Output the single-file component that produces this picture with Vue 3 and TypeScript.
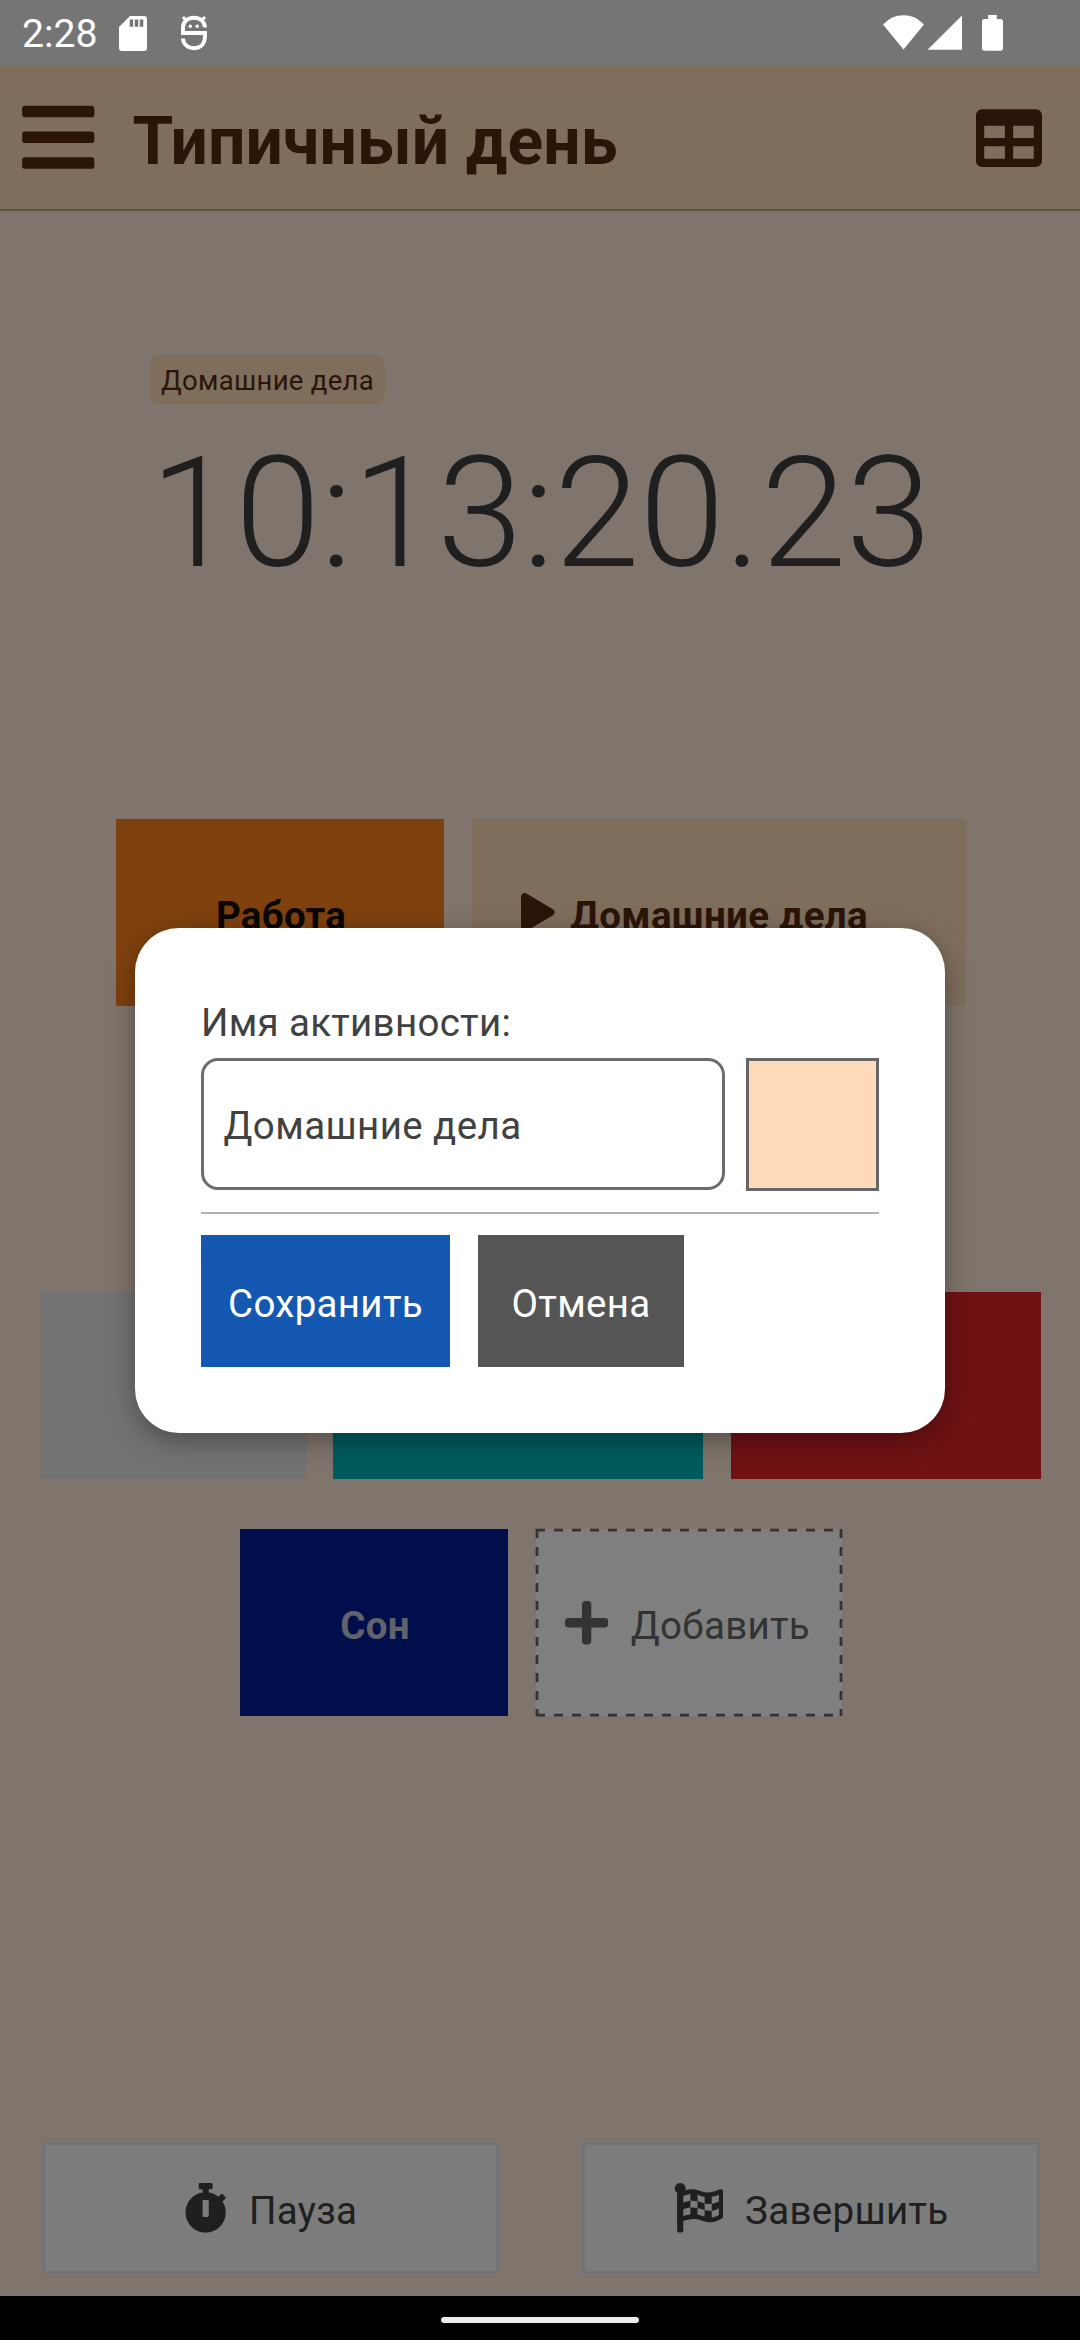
<script setup lang="ts">
interface Tile {
  id: string
  label?: string
  width: number
  color: string
  ink?: string
  playing?: boolean
}

const rows: Tile[][] = [
  [
    { id: 'work', label: 'Работа', width: 328, color: '#fe821c', ink: '#180c02' },
    { id: 'home', label: 'Домашние дела', width: 494, color: '#fedcb8', ink: '#562a10', playing: true },
  ],
  [],
  [
    { id: 'grey', width: 265, color: '#e6e6e6' },
    { id: 'teal', width: 370, color: '#00b6b8' },
    { id: 'red', width: 310, color: '#e02428' },
  ],
]

const icons = {
  bars: 'M16 132h416c8.837 0 16-7.163 16-16V76c0-8.837-7.163-16-16-16H16C7.163 60 0 67.163 0 76v40c0 8.837 7.163 16 16 16zm0 160h416c8.837 0 16-7.163 16-16v-40c0-8.837-7.163-16-16-16H16c-8.837 0-16 7.163-16 16v40c0 8.837 7.163 16 16 16zm0 160h416c8.837 0 16-7.163 16-16v-40c0-8.837-7.163-16-16-16H16c-8.837 0-16 7.163-16 16v40c0 8.837 7.163 16 16 16z',
  table: 'M464 32H48C21.49 32 0 53.49 0 80v352c0 26.51 21.49 48 48 48h416c26.51 0 48-21.49 48-48V80c0-26.51-21.49-48-48-48zM224 416H64v-96h160v96zm0-160H64v-96h160v96zm224 160H288v-96h160v96zm0-160H288v-96h160v96z',
  play: 'M424.4 214.7L72.4 6.6C43.8-10.3 0 6.1 0 47.9V464c0 37.5 40.7 60.1 72.4 41.3l352-208c31.4-18.5 31.5-64.1 0-82.6z',
  plus: 'M416 208H272V64c0-17.67-14.33-32-32-32h-32c-17.67 0-32 14.33-32 32v144H32c-17.67 0-32 14.33-32 32v32c0 17.67 14.33 32 32 32h144v144c0 17.67 14.33 32 32 32h32c17.67 0 32-14.33 32-32V304h144c17.67 0 32-14.33 32-32v-32c0-17.67-14.33-32-32-32z',
  stopwatch: 'M432 304c0 114.9-93.1 208-208 208S16 418.9 16 304c0-104 76.3-190.2 176-205.5V64h-28c-6.6 0-12-5.4-12-12V12c0-6.6 5.4-12 12-12h120c6.6 0 12 5.4 12 12v40c0 6.6-5.4 12-12 12h-28v34.5c37.5 5.8 71.7 21.6 99.7 44.6l27.5-27.5c4.7-4.7 12.3-4.7 17 0l28.3 28.3c4.7 4.7 4.7 12.3 0 17l-29.4 29.4-.6.6C419.7 223.3 432 262.2 432 304zm-176 36V188.5c0-6.6-5.4-12-12-12h-40c-6.6 0-12 5.4-12 12V340c0 6.6 5.4 12 12 12h40c6.6 0 12-5.4 12-12z',
  flag: 'M243.2 189.9V258c26.1 5.9 49.3 15.6 73.6 22.3v-68.2c-26-5.8-49.4-15.5-73.6-22.2zm223.3-123c-34.3 15.9-76.5 31.9-117 31.9C296 98.8 251.7 64 184.3 64c-25 0-47.3 4.4-68 12 2.8-7.3 4.1-15.2 3.6-23.6C118.1 24 94.8 1.2 66.3 0 34.3-1.3 8 24.3 8 56c0 19 9.5 35.8 24 45.9V488c0 13.3 10.7 24 24 24h16c13.3 0 24-10.7 24-24v-94.4c28.3-12.1 63.6-22.1 114.4-22.1 53.6 0 97.8 34.8 165.2 34.8 48.2 0 86.7-16.3 122.5-40.9 8.7-6 13.8-15.8 13.8-26.4V95.9c.1-23.3-24.2-38.8-45.4-29zM169.6 325.5c-25.8 2.7-50 8.2-73.6 16.6v-70.5c26.2-9.3 47.5-15 73.6-17.4v71.3zM464 191c-23.6 9.8-46.3 19.5-73.6 23.9V286c24.8-3.4 51.4-11.8 73.6-26v70.5c-25.1 16.1-48.5 24.7-73.6 27.1V286c-27 3.7-47.9 1.5-73.6-5.6v67.4c-23.9-7.4-47.3-16.7-73.6-21.3V258c-19.7-4.4-40.8-6.8-73.6-3.8v-70c-22.4 3.1-44.6 10.2-73.6 20.9v-70.5c33.2-12.2 50.1-19.8 73.6-22v71.6c27-3.7 48.4-1.3 73.6 5.7v-67.4c23.7 7.4 47.2 16.7 73.6 21.3v68.4c23.7 5.3 47.6 6.9 73.6 2.7V143c27-4.8 52.3-13.6 73.6-22.5z',
}
</script>

<template>
  <div class="screen">
    <div class="status">
      <span class="time">2:28</span>
      <svg class="sd" width="28" height="35" viewBox="0 0 28 35">
        <path fill="#fff" fill-rule="evenodd" d="M11 0H25Q28 0 28 3V32Q28 35 25 35H3Q0 35 0 32V11ZM10.700 3.500V10.800h3.500V3.500ZM15.800 3.500V10.800h3.500V3.500ZM20.800 3.500V10.800h3.500V3.500Z" />
      </svg>
      <svg class="bug" width="28" height="36" viewBox="0 0 28 36">
        <g fill="none" stroke="#fff" stroke-width="3.9">
          <path d="M25 12.500C24.700 6.500 20 2.700 14 2.700S3 6.500 3 12.500V18H25V21C25 29 20.500 33.200 14 33.200S3.200 29 3 23.500" />
          <path stroke-width="3" d="M3 2L7 6M25 2L21 6" />
        </g>
        <circle cx="10.300" cy="11.300" r="1.700" fill="#fff" /><circle cx="17.200" cy="11.300" r="1.700" fill="#fff" />
      </svg>
      <span class="spacer"></span>
      <svg width="121" height="37" viewBox="0 0 121 37" fill="#fff">
        <path d="M0 9.500Q8.500 .2 20.500 .2T41 9.500L20.500 34.500Z" />
        <path d="M44.500 34.800L79 .5V34.800Z" />
        <path d="M105.200 0h8.600V4H117.500Q120 4 120 6.500V33.500Q120 35.800 117.500 35.800H101.500Q99 35.800 99 33.500V6.500Q99 4 101.500 4H105.200Z" />
      </svg>
    </div>

    <div class="app">
      <header class="header">
        <svg class="menu" viewBox="0 0 448 512"><path :d="icons.bars" /></svg>
        <h1>Типичный день</h1>
        <svg class="table" viewBox="0 0 512 512"><path :d="icons.table" /></svg>
      </header>

      <section class="timer">
        <span class="badge">Домашние дела</span>
        <div class="clock">10:13:20.23</div>
      </section>

      <section class="tiles">
        <div v-for="(row, i) in rows" :key="i" class="row">
          <div
            v-for="tile in row"
            :key="tile.id"
            class="tile"
            :class="{ active: tile.playing }"
            :style="{ width: tile.width + 'px', background: tile.color, color: tile.ink }"
          >
            <svg v-if="tile.playing" class="play" viewBox="0 0 448 512"><path :d="icons.play" /></svg>
            <span v-if="tile.label">{{ tile.label }}</span>
          </div>
        </div>
        <div class="row">
          <div class="tile sleep"><span>Сон</span></div>
          <div class="tile add">
            <svg class="dashes" width="306" height="187" viewBox="0 0 306 187">
              <path d="M0 1H306M0 186H306M1 0V187M305 0V187" />
            </svg>
            <svg class="plus" viewBox="0 0 448 512"><path :d="icons.plus" /></svg>
            <span>Добавить</span>
          </div>
        </div>
      </section>

      <footer class="actions">
        <button class="action">
          <svg class="watch" viewBox="0 0 448 512"><path :d="icons.stopwatch" /></svg>
          <span>Пауза</span>
        </button>
        <button class="action">
          <svg class="flag" viewBox="0 0 512 512"><path :d="icons.flag" /></svg>
          <span>Завершить</span>
        </button>
      </footer>

      <div class="overlay">
        <div class="modal">
          <div class="caption">Имя активности:</div>
          <div class="fields">
            <div class="input">Домашние дела</div>
            <div class="swatch"></div>
          </div>
          <div class="divider"></div>
          <div class="buttons">
            <button class="save">Сохранить</button>
            <button class="cancel">Отмена</button>
          </div>
        </div>
      </div>
    </div>

    <div class="navbar"><span></span></div>
  </div>
</template>

<style>
body {
  margin: 0;
}
</style>

<style scoped>
.screen {
  width: 1080px;
  height: 2340px;
  overflow: hidden;
  display: flex;
  flex-direction: column;
  font-family: Roboto, 'Noto Sans', sans-serif;
  font-size: 38.5px;
  line-height: 45px;
  letter-spacing: 0.3px;
}
.screen * {
  box-sizing: border-box;
}
svg {
  display: block;
  flex: none;
}
button {
  font: inherit;
  letter-spacing: inherit;
  border: 0;
  padding: 0;
  border-radius: 0;
}
span,
h1 {
  white-space: nowrap;
}
.status {
  height: 66px;
  flex: none;
  display: flex;
  align-items: flex-start;
  padding: 0 76px 0 22px;
  background: #757575;
  color: #fff;
}
.status svg {
  margin-top: 15px;
}
.time {
  width: 97px;
  margin-top: 12px;
  font-size: 39.2px;
  letter-spacing: 0;
}
.status .sd {
  margin-top: 16px;
}
.bug {
  margin-left: 33px;
}
.spacer {
  flex: 1;
}
.app {
  position: relative;
  flex: 1;
  display: flex;
  flex-direction: column;
  background: #ffebd9;
}
.header {
  height: 145px;
  flex: none;
  display: flex;
  align-items: center;
  padding: 0 38px 0 22px;
  background: #fedcb8;
  border-bottom: 2px solid #b5a79a;
  color: #562a10;
}
.header svg,
.tile svg,
.action svg {
  fill: currentColor;
}
.menu {
  width: 72.5px;
  height: 82.5px;
}
h1 {
  flex: 1;
  margin: 7px 0 0 38px;
  font-size: 66px;
  line-height: 77px;
  font-weight: 700;
  letter-spacing: 0.1px;
}
.table {
  width: 66px;
  height: 66px;
}
.timer {
  height: 608px;
  flex: none;
  display: flex;
  flex-direction: column;
  align-items: flex-start;
  padding: 144px 0 0 150px;
}
.badge {
  height: 49px;
  padding: 10px 11px 0;
  border-radius: 11px;
  background: #fedcb8;
  color: #562a10;
  font-size: 27.5px;
  line-height: 32px;
}
.clock {
  margin-top: 20px;
  font-size: 154px;
  line-height: 180px;
  font-weight: 300;
  letter-spacing: -0.35px;
  color: #3e3e3e;
  white-space: nowrap;
}
.tiles {
  flex: 1;
  display: flex;
  flex-direction: column;
  gap: 49.6px;
}
.row {
  height: 187px;
  display: flex;
  justify-content: center;
  gap: 27.5px;
  padding-left: 1.5px;
}
.tile {
  height: 187px;
  flex: none;
  display: flex;
  align-items: center;
  justify-content: center;
  padding-left: 2px;
  font-weight: 700;
}
.tile.active {
  padding: 0 48px 0 0;
}
.tile span {
  margin-top: 6px;
}
.play {
  width: 33.7px;
  height: 38.5px;
  margin-right: 15.5px;
}
.sleep {
  width: 268px;
  background: #001e96;
  color: #c4c4d6;
}
.add {
  position: relative;
  width: 306px;
  padding: 0 2px 0 0;
  background: #fff;
  color: #666;
  font-weight: 400;
}
.tile .dashes {
  position: absolute;
  inset: 0;
  overflow: visible;
  fill: none;
  stroke: #666;
  stroke-width: 2.75;
  stroke-dasharray: 9 9;
}
.plus {
  width: 43.3px;
  height: 49.5px;
  margin-right: 22.5px;
}
.actions {
  height: 155px;
  flex: none;
  display: flex;
  align-items: flex-start;
  justify-content: space-between;
  padding: 1px 40px 0 42px;
}
.action {
  width: 457px;
  height: 132px;
  display: flex;
  align-items: center;
  justify-content: center;
  background: #f9f9f9;
  border: 3px solid #e0e8ee;
  color: #3e3e3e;
}
.action + .action {
  width: 458px;
}
.action span {
  margin-top: 5px;
}
.watch {
  width: 43.3px;
  height: 49.5px;
  margin-right: 22px;
}
.flag {
  width: 49.5px;
  height: 49.5px;
  margin-right: 22px;
}
.overlay {
  position: absolute;
  inset: 0;
  display: flex;
  align-items: flex-start;
  justify-content: center;
  background: rgba(0, 0, 0, 0.5);
}
.modal {
  width: 810px;
  height: 505px;
  margin-top: 862px;
  padding: 72px 66px 0;
  border-radius: 44px;
  background: #fff;
  box-shadow: 0 8px 28px rgba(0, 0, 0, 0.34);
  color: #414141;
}
.caption {
  height: 58px;
}
.fields {
  display: flex;
  justify-content: space-between;
}
.input {
  width: 524px;
  height: 132px;
  padding: 42px 19.5px 0;
  border: 3px solid #6c6c6c;
  border-radius: 17px;
  letter-spacing: 0.4px;
}
.swatch {
  width: 133px;
  height: 133px;
  margin-top: -0.5px;
  border: 3px solid #666;
  background: #fedaba;
}
.divider {
  height: 2px;
  margin-top: 21.5px;
  background: #b0b0b0;
}
.buttons {
  display: flex;
  gap: 28px;
  margin-top: 21px;
}
.buttons button {
  height: 132px;
  padding-top: 5px;
  color: #fff;
}
.buttons .save {
  width: 249px;
  background: #1558b1;
}
.buttons .cancel {
  width: 206px;
  background: #555;
}
.navbar {
  height: 44px;
  flex: none;
  display: flex;
  justify-content: center;
  background: #000;
}
.navbar span {
  width: 198px;
  height: 6px;
  margin-top: 21px;
  border-radius: 3px;
  background: #ececee;
}
</style>
